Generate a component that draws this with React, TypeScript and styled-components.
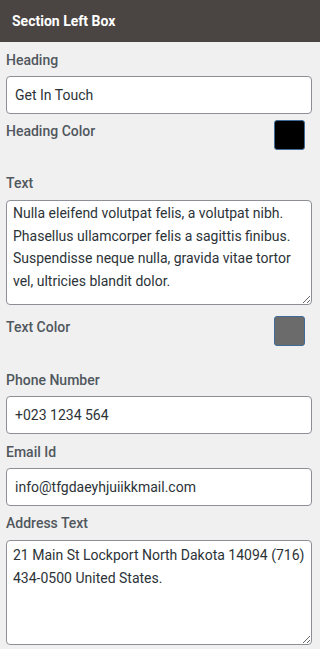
import React from 'react';
import styled, { createGlobalStyle } from 'styled-components';

const GlobalStyle = createGlobalStyle`
  * {
    box-sizing: border-box;
  }
  body {
    margin: 0;
    background: #f0f0f0;
    font-family: Roboto, "Liberation Sans", sans-serif;
  }
`;

const PanelContainer = styled.div`
  width: 320px;
  min-height: 649px;
  background: #f0f0f0;
`;

const PanelHeader = styled.div`
  height: 42px;
  display: flex;
  align-items: center;
  padding-left: 12px;
  background: #4a4543;
  color: #ffffff;
  font-size: 14px;
  font-weight: 700;
`;

const PanelBody = styled.div`
  padding: 8px 8px 0 6px;
`;

const Field = styled.div<{ $gap: number }>`
  margin-bottom: ${p => p.$gap}px;
`;

const Label = styled.label<{ $space?: number }>`
  display: block;
  font-size: 14px;
  font-weight: 500;
  line-height: 20px;
  color: #50575e;
  margin-bottom: ${p => p.$space ?? 6}px;
`;

const TextInput = styled.input`
  display: block;
  width: 100%;
  height: 38px;
  padding: 0 8px;
  border: 1px solid #8c8f94;
  border-radius: 4px;
  background: #ffffff;
  color: #2c3338;
  font-family: Roboto, "Liberation Sans", sans-serif;
  font-size: 14px;
  outline: none;
`;

const TextArea = styled.textarea<{ $padTop: number }>`
  display: block;
  width: 100%;
  height: 105px;
  padding: ${p => p.$padTop}px 6px 2px;
  border: 1px solid #8c8f94;
  border-radius: 4px;
  background: #ffffff;
  color: #2c3338;
  font-family: Roboto, "Liberation Sans", sans-serif;
  font-size: 14px;
  line-height: 22.5px;
  resize: vertical;
  outline: none;
`;

const ColorRow = styled.div<{ $gap: number }>`
  display: flex;
  justify-content: space-between;
  align-items: flex-start;
  margin-bottom: ${p => p.$gap}px;
`;

const ColorLabel = styled(Label)`
  margin: 1px 0 0;
`;

const Swatch = styled.div<{ $color: string }>`
  width: 31px;
  height: 30px;
  margin-right: 7px;
  border: 1.5px solid #3f6b98;
  border-radius: 3px;
  background: ${p => p.$color};
`;

const App: React.FC = () => {
  return (
    <PanelContainer>
      <GlobalStyle />
      <PanelHeader>Section Left Box</PanelHeader>
      <PanelBody>
        <Field $gap={6}>
          <Label>Heading</Label>
          <TextInput defaultValue="Get In Touch" />
        </Field>
        <ColorRow $gap={23}>
          <ColorLabel>Heading Color</ColorLabel>
          <Swatch $color="#000000" />
        </ColorRow>
        <Field $gap={11}>
          <Label $space={7}>Text</Label>
          <TextArea
            $padTop={1}
            defaultValue="Nulla eleifend volutpat felis, a volutpat nibh. Phasellus ullamcorper felis a sagittis finibus. Suspendisse neque nulla, gravida vitae tortor vel, ultricies blandit dolor."
          />
        </Field>
        <ColorRow $gap={24}>
          <ColorLabel>Text Color</ColorLabel>
          <Swatch $color="#6b6b6b" />
        </ColorRow>
        <Field $gap={8}>
          <Label>Phone Number</Label>
          <TextInput defaultValue="+023 1234 564" />
        </Field>
        <Field $gap={7}>
          <Label>Email Id</Label>
          <TextInput defaultValue="info@tfgdaeyhjuiikkmail.com" />
        </Field>
        <Field $gap={4}>
          <Label $space={7}>Address Text</Label>
          <TextArea
            $padTop={3}
            defaultValue="21 Main St Lockport North Dakota 14094 (716) 434-0500 United States."
          />
        </Field>
      </PanelBody>
    </PanelContainer>
  );
};

export default App;
